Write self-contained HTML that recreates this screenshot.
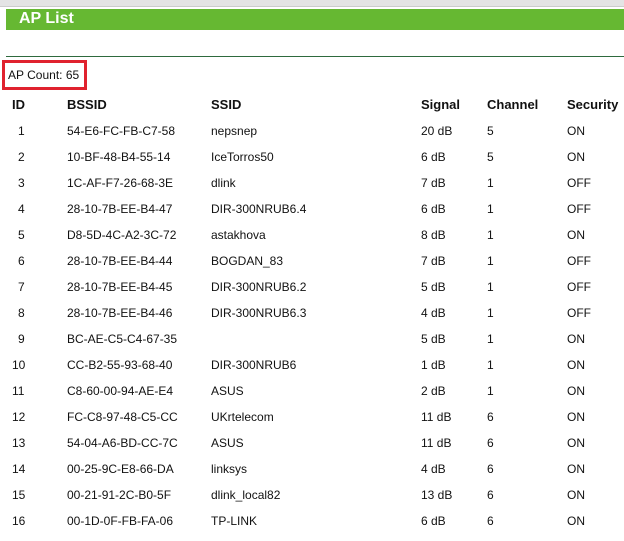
<!DOCTYPE html>
<html><head><style>
body{margin:0;width:624px;height:541px;background:#fff;font-family:"Liberation Sans",Arial,sans-serif;position:relative;overflow:hidden;color:#111}
.top{position:absolute;left:0;top:0;width:624px;height:6px;background:#e4e4e4;border-bottom:1px solid #ccc}
.top span{position:absolute;left:282px;top:-8px;font-size:10px;color:#666}
.green{position:absolute;left:6px;top:9px;width:618px;height:21px;background:#66b832}
.green b{position:absolute;left:13px;top:1px;color:#fff;font-size:16px}
.line{position:absolute;left:6px;top:56px;width:618px;height:1px;background:#2e6a3e}
.red{position:absolute;left:2px;top:60px;width:79px;height:24px;border:3px solid #e0222e}
.red span{position:absolute;left:3px;top:5px;font-size:12px}
.r{position:absolute;font-size:12px;white-space:pre}
.h{position:absolute;font-size:13px;font-weight:bold;top:97px}
</style></head><body>
<div class="top"><span>192.168.0.1</span></div>
<div class="green"><b>AP List</b></div>
<div class="line"></div>
<div class="red"><span>AP Count: 65</span></div>
<div class="h" style="left:12px">ID</div>
<div class="h" style="left:67px">BSSID</div>
<div class="h" style="left:211px">SSID</div>
<div class="h" style="left:421px">Signal</div>
<div class="h" style="left:487px">Channel</div>
<div class="h" style="left:567px">Security</div>
<div id="rows"></div>
<script>
var d=[["1","54-E6-FC-FB-C7-58","nepsnep","20 dB","5","ON"],["2","10-BF-48-B4-55-14","IceTorros50","6 dB","5","ON"],["3","1C-AF-F7-26-68-3E","dlink","7 dB","1","OFF"],["4","28-10-7B-EE-B4-47","DIR-300NRUB6.4","6 dB","1","OFF"],["5","D8-5D-4C-A2-3C-72","astakhova","8 dB","1","ON"],["6","28-10-7B-EE-B4-44","BOGDAN_83","7 dB","1","OFF"],["7","28-10-7B-EE-B4-45","DIR-300NRUB6.2","5 dB","1","OFF"],["8","28-10-7B-EE-B4-46","DIR-300NRUB6.3","4 dB","1","OFF"],["9","BC-AE-C5-C4-67-35","","5 dB","1","ON"],["10","CC-B2-55-93-68-40","DIR-300NRUB6","1 dB","1","ON"],["11","C8-60-00-94-AE-E4","ASUS","2 dB","1","ON"],["12","FC-C8-97-48-C5-CC","UKrtelecom","11 dB","6","ON"],["13","54-04-A6-BD-CC-7C","ASUS","11 dB","6","ON"],["14","00-25-9C-E8-66-DA","linksys","4 dB","6","ON"],["15","00-21-91-2C-B0-5F","dlink_local82","13 dB","6","ON"],["16","00-1D-0F-FB-FA-06","TP-LINK","6 dB","6","ON"]];
var x=[0,67,211,421,487,567],h="";
d.forEach(function(r,i){var y=124+i*26;r.forEach(function(c,j){var l=j==0?(c.length>1?12:18):x[j];h+='<div class="r" style="left:'+l+'px;top:'+y+'px">'+c+'</div>';});});
document.getElementById("rows").innerHTML=h;
</script>
</body></html>
